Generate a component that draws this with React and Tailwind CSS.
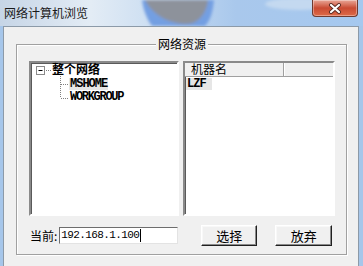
import React from 'react';

const cjk = "font-['SimSun','Noto_Sans_CJK_SC',sans-serif]";
const mono = "font-['Liberation_Mono',monospace]";

// 标题栏背景（桌面壁纸透出来的部分）
const Wallpaper = () => (
  <svg className="absolute inset-0" width="363" height="26" viewBox="0 0 363 26">
    <defs>
      <filter id="blur" x="-20%" y="-20%" width="140%" height="140%">
        <feGaussianBlur stdDeviation="1.5" />
      </filter>
      <linearGradient id="bg" x1="0" x2="1" y1="0" y2="0">
        <stop offset="0" stopColor="#c6d5e6" />
        <stop offset="0.25" stopColor="#e3ecf5" />
        <stop offset="0.4" stopColor="#cfe0f2" />
        <stop offset="0.65" stopColor="#a9c8ec" />
        <stop offset="1" stopColor="#a5c8ef" />
      </linearGradient>
    </defs>
    <rect width="363" height="26" fill="url(#bg)" />
    <g filter="url(#blur)">
      <path d="M142 0 H214 C213 10 211 20 205 26 H152 C146 18 143 8 142 0 Z" fill="#739fe2" />
      <path d="M145 0 H208 C207 10 202 19 193 23 C181 26 166 21 158 15 C151 10 147 4 145 0 Z" fill="#8d929b" />
      <ellipse cx="300" cy="4" rx="35" ry="6" fill="#c4d9f0" />
    </g>
  </svg>
);

const CloseButton = () => (
  <div className="absolute left-[312px] top-0 w-[46px] h-[17px] rounded-b-[4px] border border-t-0 border-[#6e3a30] bg-gradient-to-b from-[#e8a697] via-[#c94a32] to-[#dd6a48] flex items-center justify-center shadow-[inset_0_0_0_1px_rgba(255,255,255,0.35)]">
    <svg width="14" height="11" viewBox="0 0 14 11">
      <path d="M3 2 L11 9 M11 2 L3 9" stroke="#5a2a22" strokeWidth="4" strokeLinecap="round" />
      <path d="M3 2 L11 9 M11 2 L3 9" stroke="#ffffff" strokeWidth="2.2" strokeLinecap="round" />
    </svg>
  </div>
);

const Sunken = ({ className = '', children }) => (
  <div className={`border-2 border-t-[#8a8a8a] border-l-[#8a8a8a] border-r-white border-b-white shadow-[inset_1px_1px_0_#5a5a5a] bg-white ${className}`}>
    {children}
  </div>
);

const Btn = ({ children, className = '' }) => (
  <div className={`h-[21px] flex items-center justify-center bg-[#f0f0f0] border border-t-white border-l-white border-r-[#202020] border-b-[#202020] shadow-[inset_-1px_-1px_0_#8a8a8a,inset_1px_1px_0_#f8f8f8] text-[13px] text-black ${cjk} ${className}`}>
    {children}
  </div>
);

export default function App() {
  return (
    <div className="relative w-[363px] h-[266px] overflow-hidden bg-[#a6c6ea]">
      {/* 标题栏 */}
      <div className="relative h-[26px]">
        <Wallpaper />
        <div className={`relative pl-[4px] pt-[6px] text-[12px] leading-[14px] text-[#1a1a1a] ${cjk}`}>
          网络计算机浏览
        </div>
        <CloseButton />
      </div>

      {/* 客户区 */}
      <div className="ml-[3px] mr-[4px] h-[240px] bg-[#f0f0f0] border-l border-t border-r border-[#8c9aa8] pt-[17px] pl-[12px] pr-[11px]">
        {/* 分组框 */}
        <div className="relative h-[211px] border border-[#a0a0a0] shadow-[inset_1px_1px_0_#ffffff,1px_1px_0_#ffffff]">
          <div className={`absolute left-[139px] -top-[8px] px-[2px] bg-[#f0f0f0] text-[12px] leading-[14px] text-black ${cjk}`}>
            网络资源
          </div>

          <div className="flex pt-[16px] pl-[12px] gap-[4px]">
            {/* 树 */}
            <Sunken className="relative w-[150px] h-[155px]">
              <svg className="absolute left-0 top-0" width="60" height="45" viewBox="0 0 60 45">
                <rect x="5.5" y="3.5" width="8" height="8" fill="#fff" stroke="#8a8a8a" />
                <path d="M7.5 7.5 H11.5" stroke="#000" />
                <path d="M15 7.5 H21" stroke="#808080" strokeDasharray="1 1" />
                <path d="M29.5 13 V35 M30 21.5 H37 M30 35.5 H38" stroke="#808080" strokeDasharray="1 1" />
              </svg>
              <div className={`absolute left-[21px] -top-[1px] text-[12px] leading-[14px] text-black font-bold ${cjk}`}>
                整个网络
              </div>
              <div className={`absolute left-[38px] top-[15px] px-[1px] bg-[#e6e6e6] text-[12px] leading-[12px] font-bold tracking-[-1px] text-black ${mono}`}>
                MSHOME
              </div>
              <div className={`absolute left-[39px] top-[28px] text-[12px] leading-[12px] font-bold tracking-[-1.3px] text-black ${mono}`}>
                WORKGROUP
              </div>
            </Sunken>

            {/* 列表 */}
            <Sunken className="flex flex-col w-[152px] h-[155px]">
              <div className="flex h-[14px] bg-[#f0f0f0] border-b border-[#a0a0a0]">
                <div className={`w-[99px] pl-[6px] text-[12px] leading-[12px] text-black border-r border-[#a0a0a0] ${cjk}`}>
                  机器名
                </div>
                <div className="flex-1 border-l border-white" />
              </div>
              <div className="flex pl-[1px] pt-[1px]">
                <div className={`w-[26px] h-[12px] pl-[1px] bg-[#e6e6e6] text-[12px] leading-[12px] font-bold tracking-[-1px] text-black ${mono}`}>
                  LZF
                </div>
              </div>
            </Sunken>
          </div>

          {/* 底部一行 */}
          <div className="flex items-center pl-[13px] mt-[9px]">
            <div className={`text-[12px] leading-[14px] text-black ${cjk}`}>当前:</div>
            <div className={`ml-[2px] w-[119px] h-[17px] border border-t-[#6d6d6d] border-l-[#6d6d6d] border-r-[#e3e3e3] border-b-[#e3e3e3] bg-white flex items-center pl-[1px] text-[11px] leading-[13px] tracking-[-0.6px] text-black ${mono}`}>
              192.168.1.100
              <span className="ml-[1px] w-px h-[13px] bg-black" />
            </div>
            <Btn className="ml-[23px] w-[56px]">选择</Btn>
            <Btn className="ml-[18px] w-[57px]">放弃</Btn>
          </div>
        </div>
      </div>
    </div>
  );
}
